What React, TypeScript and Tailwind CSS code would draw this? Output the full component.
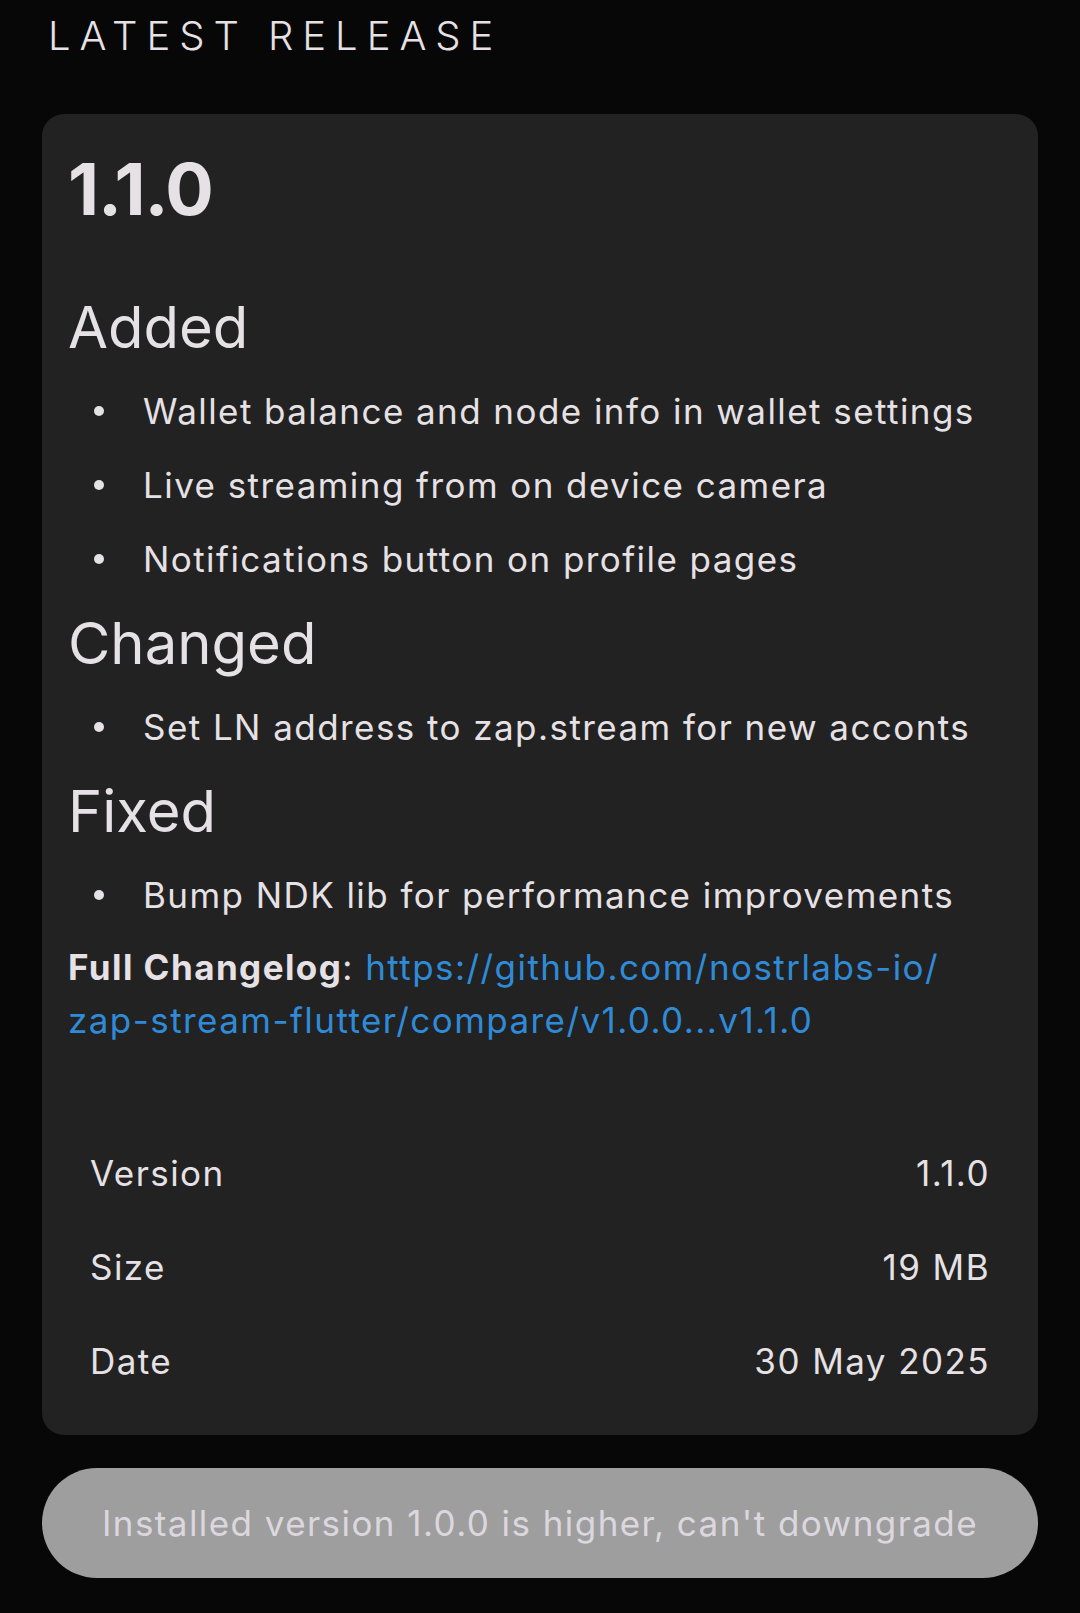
import React from 'react';

const sections = [
  {
    title: 'Added',
    items: [
      'Wallet balance and node info in wallet settings',
      'Live streaming from on device camera',
      'Notifications button on profile pages',
    ],
  },
  {
    title: 'Changed',
    items: ['Set LN address to zap.stream for new acconts'],
  },
  {
    title: 'Fixed',
    items: ['Bump NDK lib for performance improvements'],
  },
];

const details = [
  { label: 'Version', value: '1.1.0' },
  { label: 'Size', value: '19 MB' },
  { label: 'Date', value: '30 May 2025' },
];

export default function App() {
  return (
    <div className="min-h-screen bg-[#070707] font-['Inter',sans-serif] text-[#e6e1e5]">
      {/* Header */}
      <div className="px-[48px] pt-[12px] text-[40px] font-light uppercase leading-[48px] tracking-[0.224em]">
        Latest Release
      </div>

      {/* Release card */}
      <div className="mx-[42px] mt-[54px] rounded-[22px] bg-[#222222] px-[26px] pt-[39px] pb-[27px]">
        <h1 className="text-[72px] font-bold leading-[72px] tracking-[-0.015em]">1.1.0</h1>

        <div className="mt-[73px]">
          {sections.map((section, i) => (
            <div key={section.title} className={i > 0 ? 'mt-[38px]' : ''}>
              <h2 className="text-[58px] font-normal leading-[58px]">{section.title}</h2>
              <ul className="mt-[38px] flex flex-col gap-[40px]">
                {section.items.map((item) => (
                  <li key={item} className="flex items-center text-[35px] leading-[34px] tracking-[0.041em]">
                    <span className="ml-[26px] mr-[39px] h-[10px] w-[10px] shrink-0 rounded-full bg-[#e6e1e5]" />
                    <span>{item}</span>
                  </li>
                ))}
              </ul>
            </div>
          ))}
        </div>

        <p className="mt-[29px] text-[35px] leading-[53px] tracking-[0.041em]">
          <span className="font-bold">Full Changelog</span>:{' '}
          <span className="text-[#2f8bd8]">
            https://github.com/nostrlabs-io/
            <br />
            zap-stream-flutter/compare/v1.0.0...v1.1.0
          </span>
        </p>

        {/* Release details */}
        <div className="mt-[79px] px-[22px]">
          {details.map((row) => (
            <div
              key={row.label}
              className="flex h-[94px] items-center justify-between text-[35px] leading-[34px] tracking-[0.041em]"
            >
              <span>{row.label}</span>
              <span>{row.value}</span>
            </div>
          ))}
        </div>
      </div>

      {/* Disabled install button */}
      <div className="mx-[42px] mt-[33px] pb-[36px]">
        <button
          disabled
          className="flex h-[110px] w-full items-center justify-center rounded-full bg-[#9e9e9e] text-[35px] tracking-[0.041em] text-[#dcd7de]"
        >
          Installed version 1.0.0 is higher, can't downgrade
        </button>
      </div>
    </div>
  );
}
